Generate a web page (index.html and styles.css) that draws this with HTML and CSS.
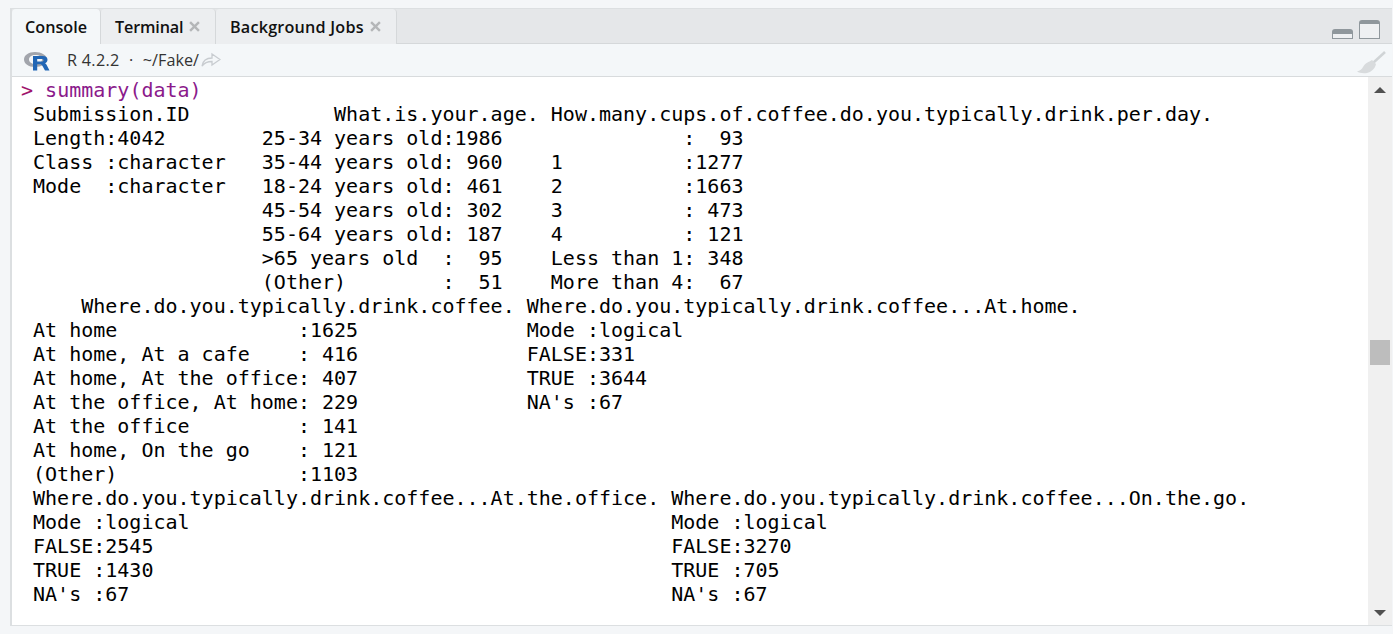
FILE: index.html
```html
<!DOCTYPE html>
<html lang="en">
<head>
<meta charset="utf-8">
<title>Console</title>
<link rel="stylesheet" href="styles.css">
</head>
<body>
<main class="pane">
  <div class="tabbar">
    <div class="tab tab-active">Console</div>
    <div class="tab tab-terminal">Terminal<svg class="close" viewBox="0 0 10 10"><path d="M1 1 9 9M9 1 1 9"/></svg></div>
    <div class="tab tab-jobs">Background Jobs<svg class="close" viewBox="0 0 10 10"><path d="M1 1 9 9M9 1 1 9"/></svg></div>
    <div class="win-controls">
      <svg class="win-min" viewBox="0 0 21 10"><path class="win-fill" d="M0 3Q0 0 3 0H18Q21 0 21 3V10H0Z"/><rect class="win-body" x="1" y="5" width="19" height="4"/></svg>
      <svg class="win-max" viewBox="0 0 21 19"><path class="win-fill" d="M0 3Q0 0 3 0H18Q21 0 21 3V19H0Z"/><rect class="win-body" x="1" y="4" width="19" height="14"/></svg>
    </div>
  </div>
  <div class="toolbar">
    <svg class="rlogo" viewBox="0 0 28 20">
      <path class="rlogo-ring" fill-rule="evenodd" d="M12 1C5.500 1 1 4.300 1 8.500S5.500 16 12 16C18.500 16 24 12.700 24 8.500S18.500 1 12 1ZM12.500 4C8.500 4 6 6 6 8.500S8.500 13 12.500 13C16.500 13 19 11 19 8.500S16.500 4 12.500 4Z"/>
      <path class="rlogo-r" fill-rule="evenodd" d="M10 5H19.500C23 5 24.500 6.500 24.500 8.800C24.500 10.500 23.300 11.700 21.800 12.200C22.800 12.600 23.300 13.300 23.800 14.200L26.500 19.500H22L19.500 15C18.800 13.700 18.200 13.200 17 13.200H14.200V19.500H10ZM14.200 8V10.500H18.500C19.800 10.500 20.500 10 20.500 9.200S19.800 8 18.500 8Z"/>
    </svg>
    <span class="version">R 4.2.2</span>
    <span class="dot">·</span>
    <span class="path">~/Fake/</span>
    <svg class="goto" viewBox="0 0 20 16"><path d="M1 14C2 8 6 6 11 6V2L19 7.500 11 13V9.500C7 9.500 3.500 10.500 1 14Z"/></svg>
    <svg class="broom" viewBox="0 0 30 23"><path class="broom-handle" d="M29 1 17 12"/><path class="broom-head" d="M16 9 20 13C19 18 15 21 11 22 7 22.500 3 22 1 20.500 4 19.500 6 18.500 7 16 9 12 13 11 16 9Z"/></svg>
  </div>
  <div class="body">
    <pre class="console"><span class="prompt">&gt; </span><span class="command">summary(data)</span>
 Submission.ID            What.is.your.age. How.many.cups.of.coffee.do.you.typically.drink.per.day.
 Length:4042        25-34 years old:1986               :  93
 Class :character   35-44 years old: 960    1          :1277
 Mode  :character   18-24 years old: 461    2          :1663
                    45-54 years old: 302    3          : 473
                    55-64 years old: 187    4          : 121
                    &gt;65 years old  :  95    Less than 1: 348
                    (Other)        :  51    More than 4:  67
     Where.do.you.typically.drink.coffee. Where.do.you.typically.drink.coffee...At.home.
 At home               :1625              Mode :logical
 At home, At a cafe    : 416              FALSE:331
 At home, At the office: 407              TRUE :3644
 At the office, At home: 229              NA's :67
 At the office         : 141
 At home, On the go    : 121
 (Other)               :1103
 Where.do.you.typically.drink.coffee...At.the.office. Where.do.you.typically.drink.coffee...On.the.go.
 Mode :logical                                        Mode :logical
 FALSE:2545                                           FALSE:3270
 TRUE :1430                                           TRUE :705
 NA's :67                                             NA's :67</pre>
    <div class="scrollbar">
      <div class="arrow arrow-up"></div>
      <div class="track"><div class="thumb"></div></div>
      <div class="arrow arrow-down"></div>
    </div>
  </div>
</main>
</body>
</html>
```
FILE: styles.css
```css
* { box-sizing: border-box; }
html, body { margin: 0; height: 100%; }
body {
  background: #f4f6f8;
  padding: 8px 1px 8px 10px;
  overflow: hidden;
}
.pane {
  height: 618px;
  display: flex;
  flex-direction: column;
  border: 1px solid #dcdfe1;
  border-left-width: 2px;
  border-right-width: 0;
}
.tabbar {
  height: 35px;
  flex: none;
  display: flex;
  background: #e5e7e9;
  border-bottom: 1px solid #d5d8da;
  font: 600 16.2px/34px "Open Sans", sans-serif;
  color: #111;
}
.tab {
  height: 35px;
  display: flex;
  align-items: center;
  border-right: 1px solid #d5d8da;
  background: #eceef0;
  border-radius: 4px 4px 0 0;
  padding-left: 13px;
}
.tab-active {
  width: 89px;
  background: #f4f7f9;
}
.tab-terminal { width: 115px; padding-left: 14px; letter-spacing: -0.15px; }
.tab-jobs { width: 181px; padding-left: 14px; letter-spacing: 0.2px; }
.close {
  width: 11px;
  height: 11px;
  margin-left: 6px;
  stroke: #b4b6b8;
  stroke-width: 2.2;
  fill: none;
}
.win-controls {
  margin-left: auto;
  display: flex;
  align-items: flex-end;
  gap: 6px;
  padding: 0 12px 4px 0;
}
.win-min { width: 21px; height: 10px; }
.win-max { width: 21px; height: 19px; }
.win-fill { fill: #8f979c; }
.win-body { fill: #eef0f2; }
.toolbar {
  height: 33px;
  flex: none;
  display: flex;
  align-items: center;
  background: #f4f7f9;
  border-bottom: 1px solid #d8dbdd;
  padding: 0 6px 0 11px;
  font: 400 16.2px "Open Sans", sans-serif;
  color: #333;
}
.rlogo { width: 28px; height: 20px; margin: 2px 16px 0 0; }
.rlogo-ring { fill: #a2a5ac; }
.rlogo-r { fill: #2166b5; }
.version { letter-spacing: 0.3px; }
.dot { margin: 0 9.5px; }
.goto { width: 20px; height: 16px; margin: 0 0 0 2px; fill: #f4f7f9; stroke: #c8ccd0; stroke-width: 1.3; }
.broom { width: 30px; height: 23px; margin: 4px 0 0 auto; }
.broom-handle { stroke: #d0d4d6; stroke-width: 2.5; fill: none; }
.broom-head { fill: #d8dbdd; }
.body {
  flex: 1;
  min-height: 0;
  display: flex;
  background: #fff;
}
.console {
  flex: 1;
  margin: 0;
  padding: 1px 0 0 9px;
  font: 400 20px/24px "DejaVu Sans Mono", monospace;
  color: #000;
  overflow: hidden;
}
.prompt { color: #a0146c; }
.command { color: #8b1a8b; }
.scrollbar {
  width: 24px;
  flex: none;
  display: flex;
  flex-direction: column;
  background: #f0f0f0;
}
.arrow { height: 24px; flex: none; display: flex; align-items: center; justify-content: center; }
.arrow::before {
  content: "";
  border-left: 6px solid transparent;
  border-right: 6px solid transparent;
}
.arrow-up { height: 25px; }
.arrow-up::before { border-bottom: 6px solid #505050; }
.arrow-down::before { border-top: 6px solid #505050; }
.track { flex: 1; padding: 238px 2px 0; }
.thumb { height: 25px; background: #bdbdbd; }
```
